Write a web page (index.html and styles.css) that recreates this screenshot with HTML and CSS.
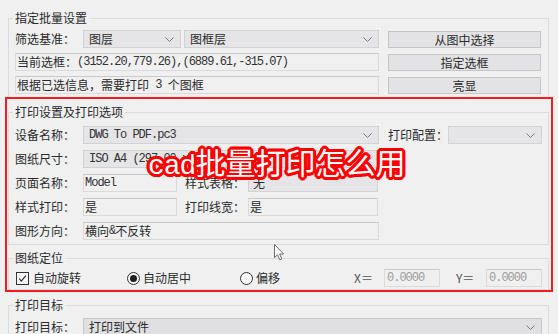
FILE: index.html
```html
<!DOCTYPE html>
<html lang="zh-CN">
<head>
<meta charset="utf-8">
<title>批量打印</title>
<link rel="stylesheet" href="styles.css">
</head>
<body>
<div class="dialog">
  <fieldset class="group g1">
    <legend>指定批量设置</legend>
    <div class="g1-grid">
      <div class="row">
        <span class="label">筛选基准：</span>
        <div class="combo w98"><span>图层</span><svg class="chev" viewBox="0 0 9 5"><polyline points="0.5,0.5 4.5,4.5 8.5,0.5"/></svg></div>
        <div class="combo w195"><span>图框层</span><svg class="chev" viewBox="0 0 9 5"><polyline points="0.5,0.5 4.5,4.5 8.5,0.5"/></svg></div>
      </div>
      <button class="btn">从图中选择</button>
      <div class="textbox wide">当前选框：<span class="mono">(3152.20,779.26),(6889.61,-315.07)</span></div>
      <button class="btn">指定选框</button>
      <div class="textbox wide">根据已选信息，需要打印<span class="mono pre"> 3 </span>个图框</div>
      <button class="btn">亮显</button>
    </div>
  </fieldset>

  <fieldset class="group g2">
    <legend>打印设置及打印选项</legend>
    <div class="rows">
      <div class="row">
        <span class="label">设备名称：</span>
        <div class="combo w296"><span class="mono">DWG To PDF.pc3</span><svg class="chev" viewBox="0 0 9 5"><polyline points="0.5,0.5 4.5,4.5 8.5,0.5"/></svg></div>
        <span class="label2 l-cfg">打印配置：</span>
        <div class="combo w94"><span></span><svg class="chev" viewBox="0 0 9 5"><polyline points="0.5,0.5 4.5,4.5 8.5,0.5"/></svg></div>
      </div>
      <div class="row">
        <span class="label">图纸尺寸：</span>
        <div class="combo w296"><span class="mono pre">ISO A4 (297.00 x 210.00 </span>毫米)<svg class="chev" viewBox="0 0 9 5"><polyline points="0.5,0.5 4.5,4.5 8.5,0.5"/></svg></div>
      </div>
      <div class="row">
        <span class="label">页面名称：</span>
        <div class="textbox w94"><span class="mono">Model</span></div>
        <span class="label2 l-mid">样式表格：</span>
        <div class="combo flat w130">无</div>
      </div>
      <div class="row">
        <span class="label">样式打印：</span>
        <div class="textbox w94">是</div>
        <span class="label2 l-mid">打印线宽：</span>
        <div class="textbox w130">是</div>
      </div>
      <div class="row">
        <span class="label">图形方向：</span>
        <div class="textbox w296">横向<span class="mono">&amp;</span>不反转</div>
      </div>
    </div>
  </fieldset>

  <fieldset class="group g3">
    <legend>图纸定位</legend>
    <div class="row opts">
      <label class="opt o1"><span class="check"><svg viewBox="0 0 13 13"><polyline points="2.5,6.5 5,9.5 10.5,3"/></svg></span>自动旋转</label>
      <label class="opt o2"><span class="radio on"></span>自动居中</label>
      <label class="opt o3"><span class="radio"></span>偏移</label>
      <span class="xy">X＝</span>
      <div class="textbox w56 dim"><span class="mono">0.0000</span></div>
      <span class="xy y">Y＝</span>
      <div class="textbox w56 dim"><span class="mono">0.0000</span></div>
    </div>
  </fieldset>

  <fieldset class="group g4">
    <legend>打印目标</legend>
    <div class="row">
      <span class="label">打印目标：</span>
      <div class="combo dark w459"><span>打印到文件</span><svg class="chev" viewBox="0 0 9 5"><polyline points="0.5,0.5 4.5,4.5 8.5,0.5"/></svg></div>
    </div>
  </fieldset>
</div>

<div class="redbox"></div>
<div class="caption"><span class="cap-latin">cad</span>批量打印怎么用</div>
<svg class="cursor" viewBox="0 0 11 17"><path d="M0.5,0.5 L0.5,13.5 L3.5,10.8 L5.8,15.8 L7.8,14.9 L5.6,10 L9.6,10 Z"/></svg>
</body>
</html>
```

FILE: styles.css
```css
html, body {
  margin: 0;
  padding: 0;
}
body {
  width: 558px;
  height: 334px;
  overflow: hidden;
  background: #f0f0f1;
  font-family: "Noto Sans CJK SC", "Noto Sans", sans-serif;
  font-size: 12px;
  color: #2b2b2b;
  position: relative;
}
.dialog {
  display: flex;
  flex-direction: column;
}
.group {
  margin: 0 0 0 8px;
  width: 541px;
  box-sizing: border-box;
  border: 1px solid #dcdcdf;
  padding: 0 6px 0 6px;
  min-inline-size: 0;
}
.group legend {
  padding: 0 2px;
  margin-left: -2px;
  line-height: 14px;
  height: 14px;
  font-size: 12px;
  color: #2b2b2b;
}
.g1 { margin-top: 11px; padding-top: 5px; padding-bottom: 4px; }
.g2 { margin-top: 6px; padding-top: 7px; padding-bottom: 4px; }
.g3 { margin-top: 6px; padding-top: 4px; padding-bottom: 2px; }
.g4 { margin-top: 8px; padding-top: 6px; padding-bottom: 4px; }

.g1-grid {
  display: grid;
  grid-template-columns: 364px 153px;
  column-gap: 9px;
  row-gap: 5px;
  grid-auto-rows: 18px;
}
.rows {
  display: flex;
  flex-direction: column;
  gap: 6px;
}
.row {
  display: flex;
  align-items: center;
  height: 18px;
}
.label {
  width: 68px;
  flex: none;
  line-height: 18px;
  white-space: nowrap;
}
.label2 {
  flex: none;
  line-height: 18px;
  white-space: nowrap;
}
.l-cfg { width: 60px; margin-left: 9px; }
.l-mid { width: 63px; margin-left: 8px; }

.combo, .textbox {
  box-sizing: border-box;
  height: 18px;
  line-height: 16px;
  flex: none;
  display: flex;
  align-items: center;
  white-space: nowrap;
  overflow: hidden;
}
.combo {
  background: #e5e5e7;
  border: 1px solid #d2d2d4;
  padding: 0 0 0 5px;
  position: relative;
}
.combo > span:first-child {
  flex: 0 1 auto;
}
.combo .chev {
  width: 9px;
  height: 5px;
  margin-left: auto;
  margin-right: 6px;
  flex: none;
}
.chev polyline {
  fill: none;
  stroke: #7a7a7a;
  stroke-width: 1;
}
.combo.flat { padding-left: 4px; }
.combo.dark {
  background: #e0e0e2;
  border-color: #c9c9cc;
}
.textbox {
  background: #f0f0f1;
  border: 1px solid #dadadc;
  border-top-color: #c9c9cb;
  padding: 0 0 0 1px;
}
.textbox.wide { width: 364px; }
.textbox.dim { color: #9a9a9a; padding-left: 2px; }

.w98 { width: 98px; }
.w195 { width: 195px; margin-left: 3px; }
.w296 { width: 296px; }
.w94 { width: 94px; }
.w130 { width: 130px; }
.w56 { width: 56px; }
.w459 { width: 459px; }

.mono {
  font-family: "Liberation Mono", "DejaVu Sans Mono", monospace;
  font-size: 12px;
  letter-spacing: -1px;
  color: #333;
}
.pre { white-space: pre; }
.dim .mono { color: #9c9c9c; }

.btn {
  box-sizing: border-box;
  height: 17px;
  align-self: center;
  margin: 0;
  padding: 0;
  background: #e3e3e5;
  border: 1px solid #c6c6c8;
  border-radius: 0;
  font-family: "Noto Sans CJK SC", sans-serif;
  font-size: 12px;
  line-height: 15px;
  color: #2b2b2b;
}

.opts .opt {
  display: flex;
  align-items: center;
  flex: none;
  line-height: 18px;
}
.o1 { width: 112px; }
.o2 { width: 113px; }
.o3 { width: 114px; }
.check {
  width: 13px;
  height: 13px;
  box-sizing: border-box;
  border: 1px solid #333;
  background: #f7f7f7;
  margin: 0 4px 0 1px;
  display: block;
}
.check svg {
  display: block;
  width: 11px;
  height: 11px;
}
.check polyline {
  fill: none;
  stroke: #222;
  stroke-width: 1.3;
}
.radio {
  width: 13px;
  height: 13px;
  box-sizing: border-box;
  border: 1px solid #333;
  border-radius: 50%;
  background: #f7f7f7;
  margin-right: 3px;
  display: flex;
  align-items: center;
  justify-content: center;
}
.radio.on::after {
  content: "";
  width: 7px;
  height: 7px;
  border-radius: 50%;
  background: #1e1e1e;
}
.xy {
  width: 30px;
  flex: none;
  color: #555;
  font-size: 12px;
  line-height: 18px;
}
.xy.y { margin-left: 16px; }

.redbox {
  position: absolute;
  left: 5px;
  top: 97px;
  width: 548px;
  height: 195px;
  box-sizing: border-box;
  border: 2px solid #f41c1c;
  pointer-events: none;
}
.caption {
  position: absolute;
  left: 148px;
  top: 141px;
  font-family: "Noto Sans CJK SC", sans-serif;
  font-size: 30px;
  line-height: 40px;
  color: #fff;
  white-space: nowrap;
  text-shadow:
    3px 0 0 #f00, -3px 0 0 #f00, 0 3px 0 #f00, 0 -3px 0 #f00,
    2px 2px 0 #f00, -2px 2px 0 #f00, 2px -2px 0 #f00, -2px -2px 0 #f00,
    3px 1px 0 #f00, 3px -1px 0 #f00, -3px 1px 0 #f00, -3px -1px 0 #f00,
    1px 3px 0 #f00, -1px 3px 0 #f00, 1px -3px 0 #f00, -1px -3px 0 #f00,
    1px 0 0 #f00, -1px 0 0 #f00, 0 1px 0 #f00, 0 -1px 0 #f00;
}
.cap-latin {
  font-family: "Liberation Mono", "DejaVu Sans Mono", monospace;
  font-size: 28px;
  letter-spacing: -1px;
}
.cursor {
  position: absolute;
  left: 274px;
  top: 244px;
  width: 11px;
  height: 17px;
}
.cursor path {
  fill: #fff;
  stroke: #6a6a6a;
  stroke-width: 1;
}
```
